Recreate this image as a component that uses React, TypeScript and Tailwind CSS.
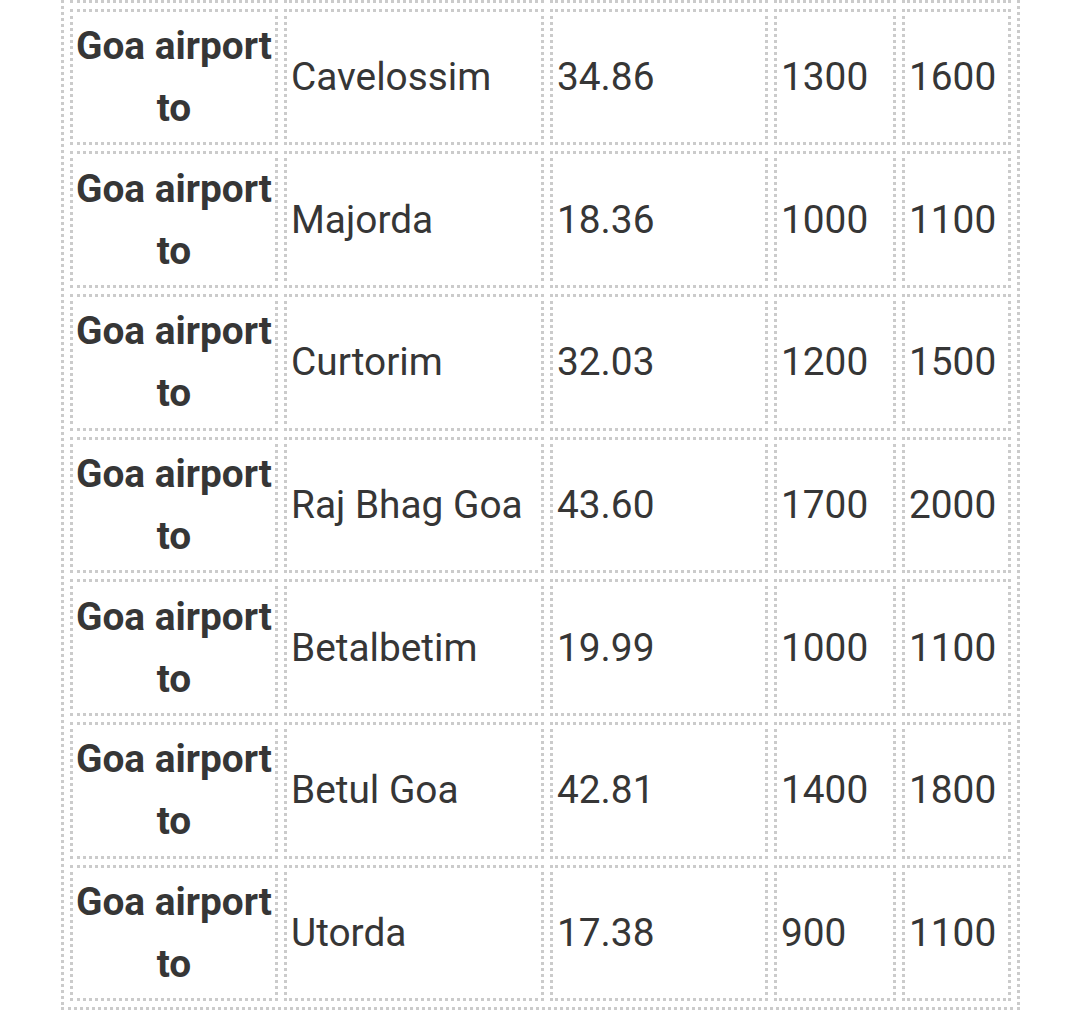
const rows = [
  { place: "Cavelossim", km: "34.86", sedan: "1300", suv: "1600" },
  { place: "Majorda", km: "18.36", sedan: "1000", suv: "1100" },
  { place: "Curtorim", km: "32.03", sedan: "1200", suv: "1500" },
  { place: "Raj Bhag Goa", km: "43.60", sedan: "1700", suv: "2000" },
  { place: "Betalbetim", km: "19.99", sedan: "1000", suv: "1100" },
  { place: "Betul Goa", km: "42.81", sedan: "1400", suv: "1800" },
  { place: "Utorda", km: "17.38", sedan: "900", suv: "1100" },
];

const cell =
  "h-[136.67px] border-[3px] border-dotted border-[#cbcbcb] px-[4px] py-0 align-middle";

export default function App() {
  return (
    <div className="h-[1015px] w-[1080px] overflow-hidden bg-white">
      <table
        className="-mt-[143px] ml-[61px] w-[959px] table-fixed border-separate border-spacing-[6px] border-[3px] border-dotted border-[#cbcbcb] text-[38.8px] leading-[62px] text-[#363636]"
        style={{ fontFamily: "Roboto, 'Noto Sans', sans-serif" }}
      >
        <colgroup>
          <col className="w-[208px]" />
          <col className="w-[260px]" />
          <col className="w-[218px]" />
          <col className="w-[122px]" />
          <col className="w-[109px]" />
        </colgroup>
        <tbody>
          {/* previous row, scrolled above the viewport: only its bottom edge shows */}
          <tr>
            <td className={cell} />
            <td className={cell} />
            <td className={cell} />
            <td className={cell} />
            <td className={cell} />
          </tr>
          {rows.map((r) => (
            <tr key={r.place}>
              <td className={`${cell} !px-0 text-center font-bold`}>
                <span className="whitespace-nowrap">Goa airport</span> to
              </td>
              <td className={`${cell} whitespace-nowrap`}>{r.place}</td>
              <td className={cell}>{r.km}</td>
              <td className={cell}>{r.sedan}</td>
              <td className={cell}>{r.suv}</td>
            </tr>
          ))}
        </tbody>
      </table>
    </div>
  );
}
